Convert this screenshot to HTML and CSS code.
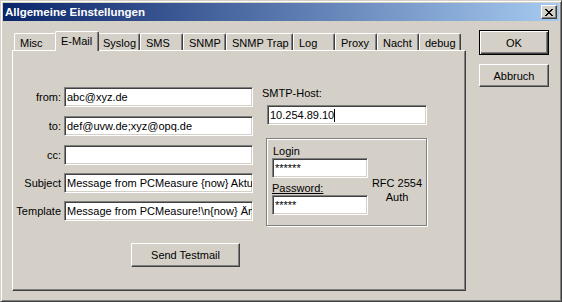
FILE: index.html
```html
<!DOCTYPE html>
<html lang="de">
<head>
    <meta charset="UTF-8">
    <title>Allgemeine Einstellungen</title>
    <link rel="stylesheet" href="styles.css">
</head>
<body>
    <div class="window">
        <div class="titlebar">
            <span class="title">Allgemeine Einstellungen</span>
            <div class="close">
                <svg width="8" height="7" viewBox="0 0 8 7" shape-rendering="crispEdges"><path fill="#000" d="M0 0h2v1H0z M6 0h2v1H6z M1 1h2v1H1z M5 1h2v1H5z M2 2h4v1H2z M3 3h2v1H3z M2 4h4v1H2z M1 5h2v1H1z M5 5h2v1H5z M0 6h2v1H0z M6 6h2v1H6z"/></svg>
            </div>
        </div>
        <div class="dialog">
            <div class="tabctl">
                <div class="tabs">
                    <div class="tab t-misc">Misc</div>
                    <div class="tab active t-mail">E-Mail</div>
                    <div class="tab t-syslog">Syslog</div>
                    <div class="tab t-sms">SMS</div>
                    <div class="tab t-snmp">SNMP</div>
                    <div class="tab t-trap">SNMP Trap</div>
                    <div class="tab t-log">Log</div>
                    <div class="tab t-proxy">Proxy</div>
                    <div class="tab t-nacht">Nacht</div>
                    <div class="tab t-debug">debug</div>
                </div>
                <div class="panel">
                    <div class="mail-form">
                        <div class="fields">
                            <div class="row"><span class="label">from:</span><div class="edit">abc@xyz.de</div></div>
                            <div class="row"><span class="label">to:</span><div class="edit">def@uvw.de;xyz@opq.de</div></div>
                            <div class="row"><span class="label">cc:</span><div class="edit"></div></div>
                            <div class="row tight"><span class="label">Subject</span><div class="edit">Message from PCMeasure {now} Aktu</div></div>
                            <div class="row tight"><span class="label">Template</span><div class="edit">Message from PCMeasure!\n{now} Än</div></div>
                            <div class="btn send">Send Testmail</div>
                        </div>
                        <div class="server">
                            <div class="lbl">SMTP-Host:</div>
                            <div class="edit host">10.254.89.10<span class="caret"></span></div>
                            <div class="group">
                                <div class="auth">
                                    <div class="lbl login">Login</div>
                                    <div class="edit small">******</div>
                                    <div class="lbl pw"><u>Password:</u></div>
                                    <div class="edit small">*****</div>
                                </div>
                                <div class="rfc">RFC 2554<br>Auth</div>
                            </div>
                        </div>
                    </div>
                </div>
            </div>
            <div class="side">
                <div class="btn default">OK</div>
                <div class="btn cancel">Abbruch</div>
            </div>
        </div>
    </div>
</body>
</html>
```

FILE: styles.css
```css
html, body{
    margin: 0;
    padding: 0;
    background: #d4d0c8;
    font-family: "Liberation Sans", Arial, sans-serif;
    font-size: 11px;
    color: #000;
}
.window{
    width: 562px;
    height: 302px;
    box-sizing: border-box;
    border: 1px solid;
    border-color: #d4d0c8 #404040 #404040 #d4d0c8;
    box-shadow: inset 1px 1px #fff, inset -1px -1px #808080;
    padding: 2px;
}
.titlebar{
    height: 18px;
    display: flex;
    align-items: center;
    padding-left: 2px;
    background: linear-gradient(to right, #0a246a, #a6caf0);
    color: #fff;
    font-weight: bold;
    font-size: 11.5px;
}
.close{
    margin-left: auto;
    margin-right: 2px;
    width: 16px;
    height: 14px;
    box-sizing: border-box;
    background: #d4d0c8;
    border: 1px solid;
    border-color: #fff #404040 #404040 #fff;
    box-shadow: inset -1px -1px #808080;
    display: flex;
    align-items: center;
    justify-content: center;
}
.dialog{
    display: flex;
    padding: 9px 0 0 9px;
}
.tabctl{
    width: 454px;
    margin-top: 1px;
}
.tabs{
    display: flex;
    align-items: flex-end;
    height: 19px;
    padding-left: 2px;
}
.tab{
    box-sizing: border-box;
    height: 17px;
    padding: 3px 0 0 5px;
    line-height: 13px;
    white-space: nowrap;
    border-top: 1px solid #fff;
    border-left: 1px solid #fff;
    border-right: 1px solid #404040;
    box-shadow: inset -1px 0 #808080;
    border-radius: 2px 2px 0 0;
    background: #d4d0c8;
}
.tab.active{
    height: 20px;
    margin: 0 -2px -1px;
    position: relative;
    z-index: 1;
}
.t-misc{ width: 43px; }
.t-mail{ width: 44px; }
.t-syslog{ width: 43px; }
.t-sms{ width: 43px; }
.t-snmp{ width: 43px; }
.t-trap{ width: 67px; }
.t-log{ width: 42px; }
.t-proxy{ width: 42px; }
.t-nacht{ width: 42px; }
.t-debug{ width: 42px; }
.panel{
    box-sizing: border-box;
    height: 241px;
    border: 1px solid;
    border-color: #fff #404040 #404040 #fff;
    box-shadow: inset -1px -1px #808080;
    padding: 36px 0 0 1px;
}
.mail-form{
    display: flex;
}
.fields{
    width: 239px;
}
.row{
    display: grid;
    grid-template-columns: 47px 189px;
    column-gap: 3px;
    align-items: center;
    height: 20px;
}
.row + .row{
    margin-top: 9px;
}
.row.tight{
    margin-top: 8px;
}
.label{
    text-align: right;
    white-space: nowrap;
}
.edit{
    box-sizing: border-box;
    height: 20px;
    background: #fff;
    border: 1px solid;
    border-color: #808080 #fff #fff #808080;
    box-shadow: inset 1px 1px #404040, inset -1px -1px #d4d0c8;
    padding-left: 2px;
    line-height: 18px;
    white-space: nowrap;
    overflow: hidden;
}
.caret{
    display: inline-block;
    width: 1px;
    height: 13px;
    background: #000;
    vertical-align: -3px;
}
.btn{
    box-sizing: border-box;
    border: 1px solid;
    border-color: #fff #404040 #404040 #fff;
    box-shadow: inset -1px -1px #808080;
    display: flex;
    align-items: center;
    justify-content: center;
    background: #d4d0c8;
}
.send{
    margin: 22px 0 0 117px;
    width: 109px;
    height: 24px;
}
.server{
    margin-left: 9px;
    width: 165px;
}
.lbl{
    line-height: 13px;
}
.host{
    margin: 5px 0 0 5px;
    width: 160px;
}
.group{
    margin: 13px 0 0 4px;
    width: 161px;
    height: 88px;
    box-sizing: border-box;
    border: 1px solid #808080;
    box-shadow: inset 1px 1px #fff, 1px 1px #fff;
    display: flex;
}
.auth{
    padding: 6px 0 0 5px;
}
.login{
    padding-left: 1px;
}
.pw{
    margin-top: 4px;
    line-height: 13px;
}
.small{
    width: 96px;
}
.rfc{
    flex: 1;
    text-align: center;
    line-height: 14px;
    padding-top: 37px;
}
.side{
    margin-left: 13px;
    width: 70px;
}
.btn.default{
    height: 25px;
    border: 1px solid #000;
    box-shadow: inset 1px 1px #fff, inset -1px -1px #404040, inset -2px -2px #808080;
}
.btn.cancel{
    margin-top: 9px;
    height: 23px;
}
```
